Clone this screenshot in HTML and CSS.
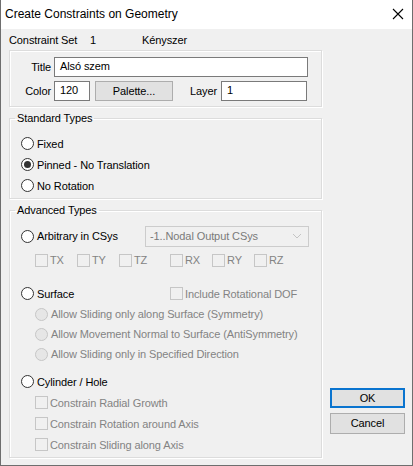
FILE: index.html
```html
<!DOCTYPE html>
<html lang="en">
  <head>
    <meta charset="UTF-8" />
    <title>Create Constraints on Geometry</title>
    <link rel="stylesheet" href="styles.css">
  </head>
  <body>
    <div class="window">
      <div class="titlebar">
        <span class="title-text">Create Constraints on Geometry</span>
        <svg class="close" width="12" height="12" viewBox="0 0 12 12">
          <path d="M1 1 L11 11 M11 1 L1 11" stroke="#000" stroke-width="1.1" fill="none" />
        </svg>
      </div>
      <div class="set-row">
        <span class="set-label">Constraint Set</span>
        <span class="set-id">1</span>
        <span>Kényszer</span>
      </div>
      <div class="content">
        <div class="left-col">
          <fieldset class="group props">
            <div class="prop-row">
              <label class="prop-label">Title</label>
              <div class="textbox title-box">Alsó szem</div>
            </div>
            <div class="prop-row">
              <label class="prop-label">Color</label>
              <div class="textbox color-box">120</div>
              <div class="btn palette">Palette...</div>
              <label class="layer-label">Layer</label>
              <div class="textbox layer-box">1</div>
            </div>
          </fieldset>

          <fieldset class="group standard">
            <legend>Standard Types</legend>
            <div class="opt"><span class="radio"></span>Fixed</div>
            <div class="opt"><span class="radio checked"></span>Pinned - No Translation</div>
            <div class="opt"><span class="radio"></span>No Rotation</div>
          </fieldset>

          <fieldset class="group advanced">
            <legend>Advanced Types</legend>
            <div class="opt csys-row">
              <span class="radio"></span>Arbitrary in CSys
              <div class="combo">
                <span>-1..Nodal Output CSys</span>
                <svg width="10" height="6" viewBox="0 0 10 6">
                  <path d="M1 1 L5 5 L9 1" stroke="#c4c4c4" fill="none" />
                </svg>
              </div>
            </div>
            <div class="dof-row">
              <span class="dof"><span class="check"></span>TX</span>
              <span class="dof"><span class="check"></span>TY</span>
              <span class="dof"><span class="check"></span>TZ</span>
              <span class="dof rot-start"><span class="check"></span>RX</span>
              <span class="dof"><span class="check"></span>RY</span>
              <span class="dof"><span class="check"></span>RZ</span>
            </div>
            <div class="opt surface-row">
              <span class="surface-main"><span class="radio"></span>Surface</span>
              <span class="sub"><span class="check"></span>Include Rotational DOF</span>
            </div>
            <div class="sub sub-radio"><span class="radio off"></span>Allow Sliding only along Surface (Symmetry)</div>
            <div class="sub sub-radio"><span class="radio off"></span>Allow Movement Normal to Surface (AntiSymmetry)</div>
            <div class="sub sub-radio"><span class="radio off"></span>Allow Sliding only in Specified Direction</div>
            <div class="opt cyl-row"><span class="radio"></span>Cylinder / Hole</div>
            <div class="sub sub-check"><span class="check"></span>Constrain Radial Growth</div>
            <div class="sub sub-check"><span class="check"></span>Constrain Rotation around Axis</div>
            <div class="sub sub-check"><span class="check"></span>Constrain Sliding along Axis</div>
          </fieldset>
        </div>
        <div class="right-col">
          <div class="btn ok">OK</div>
          <div class="btn cancel">Cancel</div>
        </div>
      </div>
    </div>
  </body>
</html>
```

FILE: styles.css
```css
body {
  margin: 0;
  background-color: #f0f0f0;
  font-family: "Liberation Sans", Arial, sans-serif;
  font-size: 11px;
  letter-spacing: -0.1px;
  color: #000;
}

.window {
  width: 413px;
  height: 466px;
  box-sizing: border-box;
  border: 1px solid #6e6e6e;
  border-top: none;
  background-color: #f0f0f0;
}

.titlebar {
  height: 28px;
  background-color: #fff;
  display: flex;
  align-items: center;
  justify-content: space-between;
  padding: 0 8px 1px 4px;
}

.title-text {
  font-size: 12px;
  letter-spacing: 0;
}

.set-row {
  height: 21px;
  display: flex;
  align-items: center;
  padding-left: 8px;
}

.set-label {
  width: 81px;
}

.set-id {
  width: 52px;
}

.content {
  display: flex;
  gap: 8px;
  padding-left: 8px;
}

.left-col {
  width: 313px;
}

.right-col {
  width: 75px;
  display: flex;
  flex-direction: column;
  justify-content: flex-end;
  gap: 5px;
  padding-bottom: 24px;
}

.group {
  margin: 0;
  border: 1px solid #dcdcdc;
  box-shadow: inset 1px 1px #fff, 1px 1px #fff;
  min-width: 0;
}

.group legend {
  margin-left: -6px;
  padding: 0 2px;
  line-height: 16px;
}

.props {
  height: 57px;
  box-sizing: border-box;
  padding: 6px 0 0 0;
  display: flex;
  flex-direction: column;
  gap: 4px;
}

.prop-row {
  display: flex;
  align-items: center;
  height: 20px;
}

.prop-label {
  width: 41px;
  text-align: right;
  margin-right: 3px;
}

.textbox {
  height: 20px;
  box-sizing: border-box;
  border: 1px solid #7a7a7a;
  background-color: #fff;
  padding-left: 5px;
  line-height: 17px;
}

.title-box {
  width: 254px;
}

.color-box {
  width: 36px;
}

.btn {
  box-sizing: border-box;
  border: 1px solid #adadad;
  background-color: #e1e1e1;
  text-align: center;
}

.palette {
  width: 78px;
  height: 20px;
  line-height: 18px;
  margin-left: 5px;
}

.layer-label {
  width: 44px;
  text-align: right;
  margin-right: 4px;
}

.layer-box {
  width: 86px;
}

.ok {
  height: 20px;
  line-height: 16px;
  border: 2px solid #0a74cf;
}

.cancel {
  height: 21px;
  line-height: 19px;
}

.standard {
  margin-top: 3px;
  padding: 7px 0 2px 11px;
}

.advanced {
  margin-top: 3px;
  height: 256px;
  box-sizing: border-box;
  padding: 6px 0 0 11px;
}

.opt {
  height: 21px;
  display: flex;
  align-items: center;
}

.radio {
  width: 13px;
  height: 13px;
  box-sizing: border-box;
  border: 1px solid #333;
  border-radius: 50%;
  background-color: #fff;
  margin-right: 3px;
  display: inline-flex;
  align-items: center;
  justify-content: center;
  flex-shrink: 0;
}

.radio.checked::after {
  content: "";
  width: 7px;
  height: 7px;
  border-radius: 50%;
  background-color: #333;
}

.radio.off {
  border-color: #c6c6c6;
  background-color: #e6e6e6;
}

.check {
  width: 13px;
  height: 13px;
  box-sizing: border-box;
  border: 1px solid #c6c6c6;
  background-color: #f0f0f0;
  margin-right: 2px;
  display: inline-block;
  flex-shrink: 0;
}

.csys-row {
  height: 24px;
}

.combo {
  margin-left: auto;
  margin-right: 12px;
  width: 164px;
  height: 21px;
  box-sizing: border-box;
  border: 1px solid #cccccc;
  background-color: #f0f0f0;
  display: flex;
  align-items: center;
  justify-content: space-between;
  padding: 0 6px 0 4px;
  color: #7a7a7a;
}

.dof-row {
  height: 24px;
  display: flex;
  align-items: center;
  padding-left: 14px;
  color: #838383;
}

.dof {
  width: 42px;
  display: flex;
  align-items: center;
}

.dof.rot-start {
  margin-left: 9px;
}

.surface-row {
  margin-top: 11px;
}

.surface-main {
  width: 149px;
  display: flex;
  align-items: center;
}

.sub {
  display: flex;
  align-items: center;
  color: #838383;
}

.sub-radio {
  height: 20px;
  padding-left: 14px;
}

.cyl-row {
  margin-top: 7px;
}

.sub-check {
  height: 21px;
  padding-left: 14px;
}
```
